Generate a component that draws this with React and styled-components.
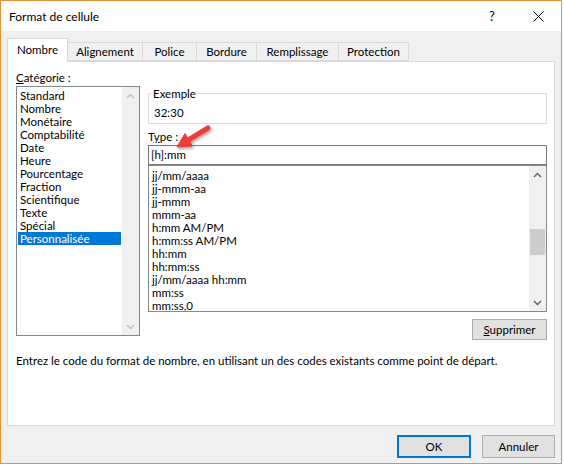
import React from "react";
import styled, { createGlobalStyle } from "styled-components";

const Global = createGlobalStyle`
  html, body { margin: 0; padding: 0; background: #ffffff; }
  body { font-family: Lato, "Noto Sans", sans-serif; font-size: 11.5px; color: #000; }
  * { box-sizing: border-box; }
`;

const Window = styled.div`
  position: relative;
  width: 562px;
  height: 464px;
  border: 1px solid #e4933a;
  background: #f0f0f0;
  display: flex;
  flex-direction: column;
`;

const TitleBar = styled.div`
  height: 30px;
  background: #ffffff;
  display: flex;
  align-items: center;
  padding-left: 8px;
  font-size: 12px;
`;

const Title = styled.div`
  flex: 1;
`;

const TitleButton = styled.div`
  width: 46px;
  height: 30px;
  display: flex;
  align-items: center;
  justify-content: center;
  font-size: 13px;
`;

const Body = styled.div`
  padding: 6px 6px 0 6px;
  display: flex;
  flex-direction: column;
`;

const TabBar = styled.div`
  display: flex;
  align-items: flex-end;
  height: 24px;
  position: relative;
  z-index: 1;
`;

const Tab = styled.div`
  height: ${(p) => (p.$active ? 24 : 19)}px;
  margin-bottom: ${(p) => (p.$active ? -1 : 0)}px;
  padding: ${(p) => (p.$active ? "0 0 3px" : "0")};
  width: ${(p) => p.$w}px;
  display: flex;
  align-items: center;
  justify-content: center;
  border: 1px solid #d9d9d9;
  border-bottom: ${(p) => (p.$active ? "none" : "1px solid #d9d9d9")};
  border-left: ${(p) => (p.$first ? "1px solid #d9d9d9" : "none")};
  background: ${(p) => (p.$active ? "#ffffff" : "#f0f0f0")};
`;

const Panel = styled.div`
  height: 365px;
  background: #ffffff;
  border: 1px solid #d9d9d9;
  padding: 9px 7px 0 8px;
  display: flex;
  flex-direction: column;
`;

const Columns = styled.div`
  display: flex;
  gap: 8px;
`;

const LeftCol = styled.div`
  width: 124px;
  display: flex;
  flex-direction: column;
`;

const RightCol = styled.div`
  flex: 1;
  display: flex;
  flex-direction: column;
  padding-top: 22px;
`;

const Label = styled.div`
  line-height: 13px;
  height: 13px;
  margin-bottom: ${(p) => p.$mb || 0}px;
  margin-top: ${(p) => p.$mt || 0}px;
`;

const U = styled.span`
  text-decoration: underline;
  text-underline-offset: 1px;
`;

const ListBox = styled.div`
  height: ${(p) => p.$h}px;
  border: 1px solid #828790;
  background: #fff;
  display: flex;
`;

const Items = styled.div`
  flex: 1;
  padding: ${(p) => p.$pad};
  overflow: hidden;
`;

const Item = styled.div`
  height: 13px;
  line-height: 13px;
  padding-left: ${(p) => p.$pl}px;
  white-space: nowrap;
  background: ${(p) => (p.$sel ? "#0078d7" : "transparent")};
  color: ${(p) => (p.$sel ? "#ffffff" : "#000000")};
`;

const ScrollBar = styled.div`
  width: 17px;
  background: #f0f0f0;
  display: flex;
  flex-direction: column;
  align-items: center;
`;

const ScrollArrow = styled.div`
  height: 17px;
  width: 17px;
  display: flex;
  align-items: center;
  justify-content: center;
`;

const ScrollTrack = styled.div`
  flex: 1;
  width: 100%;
  position: relative;
`;

const Thumb = styled.div`
  position: absolute;
  left: 1px;
  right: 1px;
  background: #cdcdcd;
`;

const GroupBox = styled.div`
  position: relative;
  height: 31px;
  border: 1px solid #dcdcdc;
  padding: 12px 0 0 5px;
  line-height: 13px;
`;

const Legend = styled.span`
  position: absolute;
  top: -7px;
  left: 2px;
  padding: 0 2px;
  background: #fff;
  line-height: 13px;
`;

const TextInput = styled.div`
  height: 20px;
  border: 1px solid #7a7a7a;
  padding: 2px 0 0 2px;
  line-height: 14px;
`;

const ButtonRow = styled.div`
  display: flex;
  justify-content: flex-end;
  gap: ${(p) => p.$gap || 0}px;
  margin-top: ${(p) => p.$mt}px;
`;

const Button = styled.div`
  width: ${(p) => p.$w}px;
  height: ${(p) => p.$h}px;
  display: flex;
  align-items: center;
  justify-content: center;
  background: #e1e1e1;
  border: ${(p) => (p.$default ? "2px solid #0078d7" : "1px solid #adadad")};
`;

const Description = styled.div`
  margin-top: 14px;
  line-height: 13px;
  white-space: nowrap;
`;

const Arrow = styled.svg`
  position: absolute;
  left: 170px;
  top: 119px;
`;

const Chevron = ({ up, color }) => (
  <svg width="9" height="6" viewBox="0 0 9 6">
    <path
      d={up ? "M1 5 L4.5 1.5 L8 5" : "M1 1 L4.5 4.5 L8 1"}
      fill="none"
      stroke={color}
      strokeWidth="1.4"
    />
  </svg>
);

const categories = [
  "Standard",
  "Nombre",
  "Monétaire",
  "Comptabilité",
  "Date",
  "Heure",
  "Pourcentage",
  "Fraction",
  "Scientifique",
  "Texte",
  "Spécial",
  "Personnalisée",
];

const formats = [
  "jj/mm/aaaa",
  "jj-mmm-aa",
  "jj-mmm",
  "mmm-aa",
  "h:mm AM/PM",
  "h:mm:ss AM/PM",
  "hh:mm",
  "hh:mm:ss",
  "jj/mm/aaaa hh:mm",
  "mm:ss",
  "mm:ss,0",
];

const tabs = [
  ["Nombre", 61],
  ["Alignement", 75],
  ["Police", 54],
  ["Bordure", 60],
  ["Remplissage", 82],
  ["Protection", 70],
];

export default function App() {
  return (
    <>
      <Global />
      <Window>
        <TitleBar>
          <Title>Format de cellule</Title>
          <TitleButton>?</TitleButton>
          <TitleButton>
            <svg width="11" height="11" viewBox="0 0 11 11">
              <path d="M0.5 0.5 L10.5 10.5 M10.5 0.5 L0.5 10.5" stroke="#000" strokeWidth="1" />
            </svg>
          </TitleButton>
        </TitleBar>
        <Body>
          <TabBar>
            {tabs.map(([t, w], i) => (
              <Tab key={t} $w={w} $active={i === 0} $first={i === 0}>
                {t}
              </Tab>
            ))}
          </TabBar>
          <Panel>
            <Columns>
              <LeftCol>
                <Label $mb={2}>
                  <U>C</U>atégorie :
                </Label>
                <ListBox $h={250}>
                  <Items $pad="2px 1px 0 1px">
                    {categories.map((c, i) => (
                      <Item key={c} $pl={2} $sel={i === categories.length - 1}>
                        {c}
                      </Item>
                    ))}
                  </Items>
                  <ScrollBar>
                    <ScrollArrow>
                      <Chevron up color="#c0c0c0" />
                    </ScrollArrow>
                    <ScrollTrack />
                    <ScrollArrow>
                      <Chevron color="#c0c0c0" />
                    </ScrollArrow>
                  </ScrollBar>
                </ListBox>
              </LeftCol>
              <RightCol>
                <GroupBox>
                  <Legend>Exemple</Legend>
                  32:30
                </GroupBox>
                <Label $mt={6} $mb={2}>
                  T<U>y</U>pe :
                </Label>
                <TextInput>[h]:mm</TextInput>
                <ListBox $h={147}>
                  <Items $pad="3px 0 0 2px">
                    {formats.map((f) => (
                      <Item key={f} $pl={1}>
                        {f}
                      </Item>
                    ))}
                  </Items>
                  <ScrollBar>
                    <ScrollArrow>
                      <Chevron up color="#606060" />
                    </ScrollArrow>
                    <ScrollTrack>
                      <Thumb style={{ top: 46, height: 26 }} />
                    </ScrollTrack>
                    <ScrollArrow>
                      <Chevron color="#606060" />
                    </ScrollArrow>
                  </ScrollBar>
                </ListBox>
                <ButtonRow $mt={7}>
                  <Button $w={75} $h={21}>
                    <span>
                      <U>S</U>upprimer
                    </span>
                  </Button>
                </ButtonRow>
              </RightCol>
            </Columns>
            <Description>
              Entrez le code du format de nombre, en utilisant un des codes existants comme point de départ.
            </Description>
          </Panel>
          <ButtonRow $mt={9} $gap={11}>
            <Button $w={74} $h={23} $default>
              OK
            </Button>
            <Button $w={73} $h={23}>
              Annuler
            </Button>
          </ButtonRow>
        </Body>
        <Arrow width="44" height="34" viewBox="0 0 44 34">
          <defs>
            <filter id="sh" x="-30%" y="-30%" width="160%" height="160%">
              <feDropShadow dx="1" dy="2" stdDeviation="1.5" floodColor="#000" floodOpacity="0.35" />
            </filter>
          </defs>
          <g filter="url(#sh)" fill="#ec3e3a" stroke="#ec3e3a">
            <path d="M37 8 L19 19" strokeWidth="5" strokeLinecap="round" fill="none" />
            <path d="M6 27 L21.5 26 L14 13.5 Z" strokeWidth="1" strokeLinejoin="round" />
          </g>
        </Arrow>
      </Window>
    </>
  );
}
